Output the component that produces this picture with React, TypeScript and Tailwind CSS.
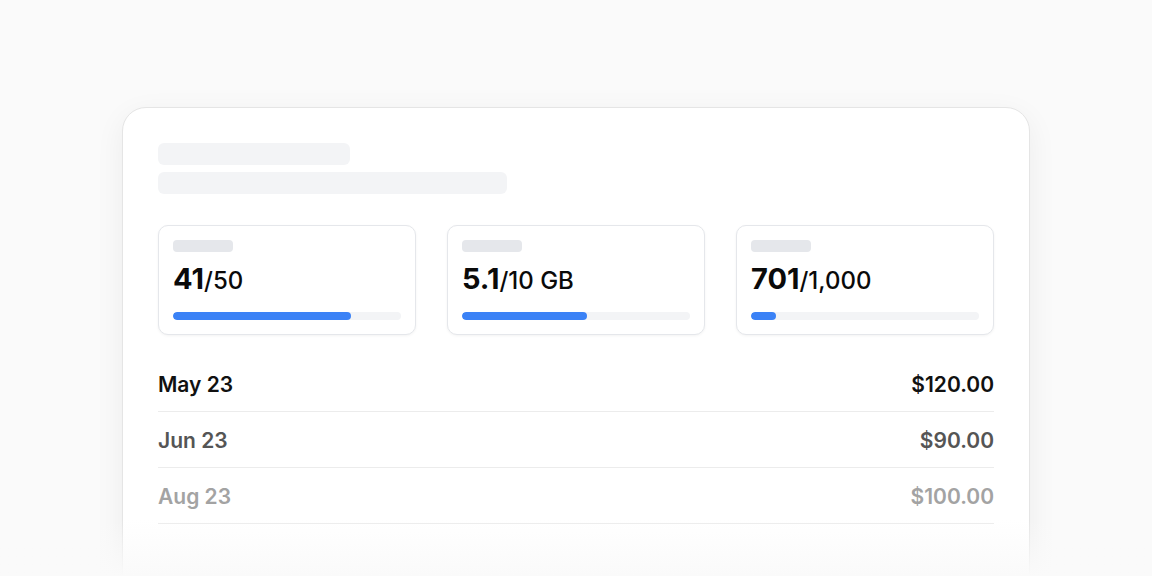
import type React from "react"

const stats = [
  { value: "41", total: "/50", pct: 78 },
  { value: "5.1", total: "/10 GB", pct: 55 },
  { value: "701", total: "/1,000", pct: 11 },
]

const rows = [
  { date: "May 23", amount: "$120.00", color: "text-[#111111]" },
  { date: "Jun 23", amount: "$90.00", color: "text-[#555555]" },
  { date: "Aug 23", amount: "$100.00", color: "text-[#a3a3a3]" },
]

const App: React.FC = () => {
  return (
    <div
      className="relative h-[576px] w-full overflow-hidden bg-[#fafafa]"
      style={{ fontFamily: "Inter, 'Liberation Sans', sans-serif" }}
    >
      <div className="mx-auto mt-[107px] h-[520px] w-[908px] rounded-[24px] border border-[#e5e5e5] bg-white px-[35px] pt-[35px] shadow-[0_8px_30px_rgba(0,0,0,0.06)]">
        {/* header skeleton */}
        <div className="flex flex-col gap-[7px]">
          <div className="h-[22px] w-[192px] rounded-md bg-[#f3f4f6]" />
          <div className="h-[22px] w-[349px] rounded-md bg-[#f3f4f6]" />
        </div>

        {/* usage cards */}
        <div className="mt-[31px] grid grid-cols-3 gap-[31px]">
          {stats.map((s) => (
            <div
              key={s.value}
              className="rounded-[10px] border border-[#e5e7eb] bg-white px-[14px] pt-[14px] pb-[14px] shadow-[0_1px_3px_rgba(0,0,0,0.05)]"
            >
              <div className="h-[12px] w-[60px] rounded bg-[#e5e7eb]" />
              <div className="mt-[9px] flex items-baseline text-[#0a0a0a]">
                <span className="text-[29px] font-bold leading-[36px]">{s.value}</span>
                <span className="text-[24px] font-medium">{s.total}</span>
              </div>
              <div className="mt-[13px] h-2 w-full overflow-hidden rounded-full bg-[#f3f4f6]">
                <div className="h-full rounded-full bg-[#3b82f6]" style={{ width: `${s.pct}%` }} />
              </div>
            </div>
          ))}
        </div>

        {/* billing rows */}
        <div className="mt-[21px]">
          {rows.map((r) => (
            <div
              key={r.date}
              className={`flex h-[56px] items-center justify-between border-b border-[#ececec] pt-[3px] text-[21px] font-semibold ${r.color}`}
            >
              <span>{r.date}</span>
              <span>{r.amount}</span>
            </div>
          ))}
        </div>
      </div>

      {/* bottom fade */}
      <div className="pointer-events-none absolute inset-x-0 bottom-0 h-[56px] bg-gradient-to-b from-[#fafafa]/0 to-[#fafafa]" />
    </div>
  )
}

export default App
